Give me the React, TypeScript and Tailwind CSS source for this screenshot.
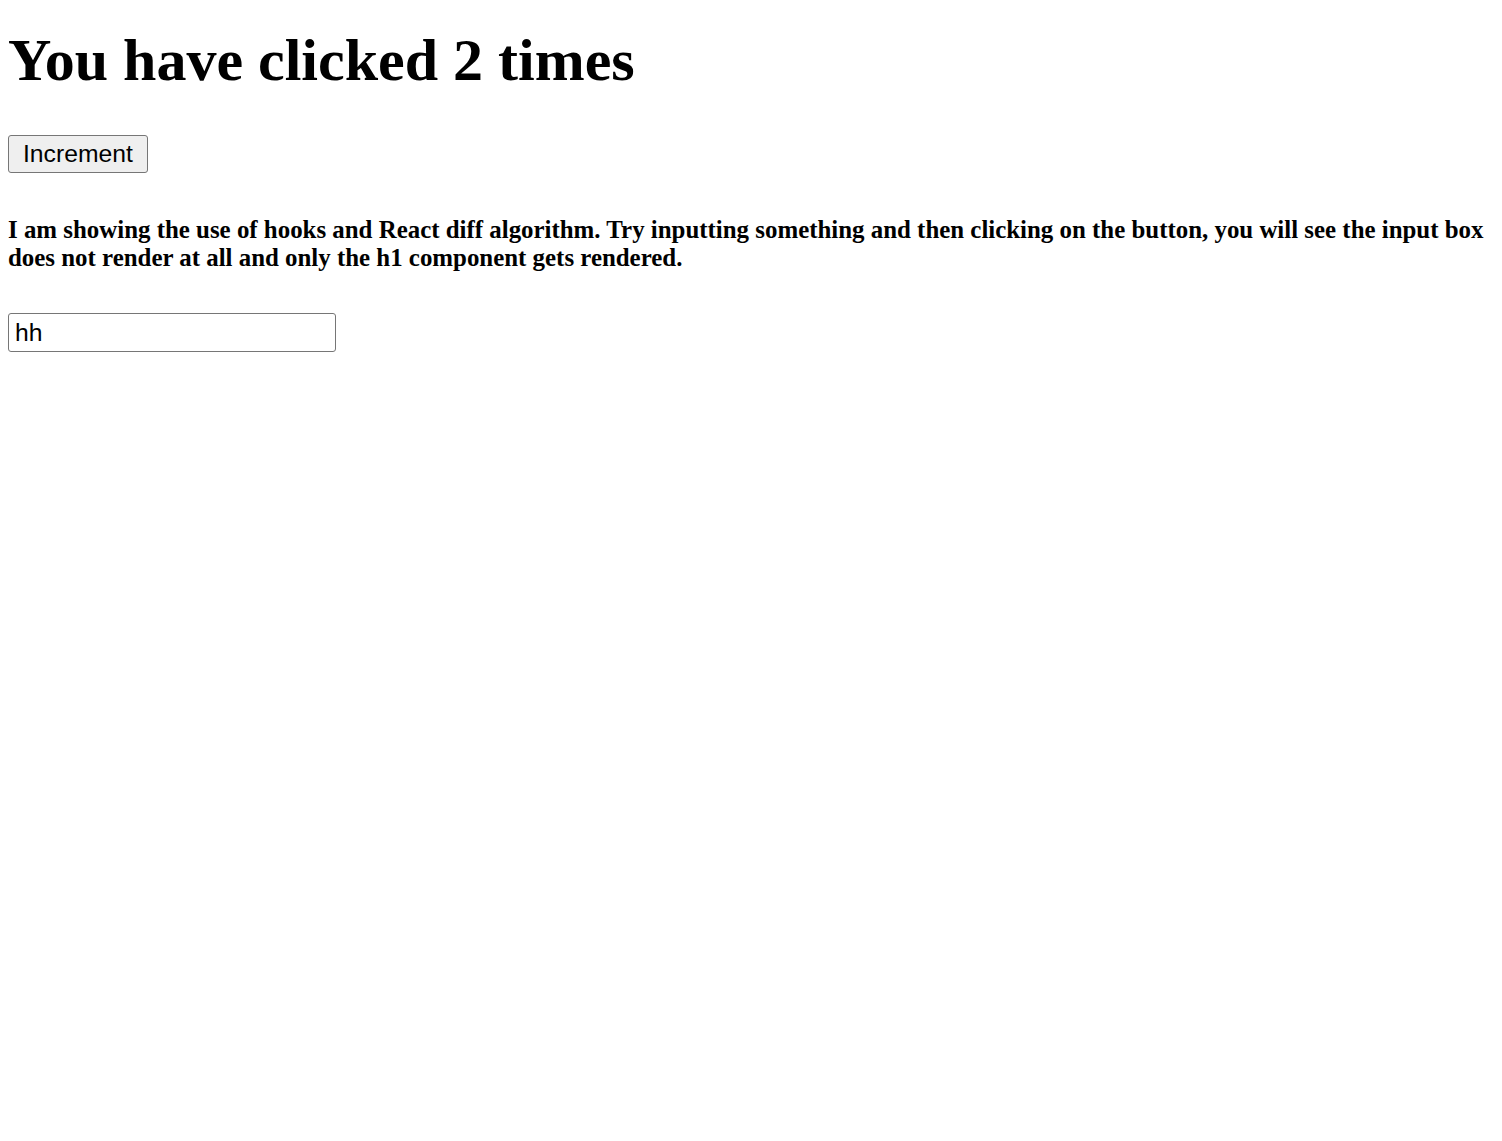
import { useState } from 'react'

export default function App() {
  const [count, setCount] = useState(2)
  const [text, setText] = useState('hh')

  return (
    <div className="min-h-screen bg-white p-2 text-black">
      <h1 className="mt-[18px] font-['Liberation_Serif',serif] text-[60px] font-bold leading-[69px]">
        You have clicked {count} times
      </h1>
      <button
        className="mt-10 block rounded-[3px] border border-[#767676] bg-[#efefef] px-[14px] py-1 font-['Liberation_Sans',Arial,sans-serif] text-[24.7px] leading-[28px]"
        onClick={() => setCount(count + 1)}
      >
        Increment
      </button>
      <h3 className="mt-[43px] font-['Liberation_Serif',serif] text-[24.9px] font-bold leading-[28px]">
        I am showing the use of hooks and React diff algorithm. Try inputting something and then
        clicking on the button, you will see the input box does not render at all and only the h1
        component gets rendered.
      </h3>
      <input
        className="mt-[41px] block h-[39px] w-[328px] rounded-[3px] border border-[#767676] px-[6px] font-['Liberation_Sans',Arial,sans-serif] text-[24.7px] outline-none"
        value={text}
        onChange={(e) => setText(e.target.value)}
      />
    </div>
  )
}
